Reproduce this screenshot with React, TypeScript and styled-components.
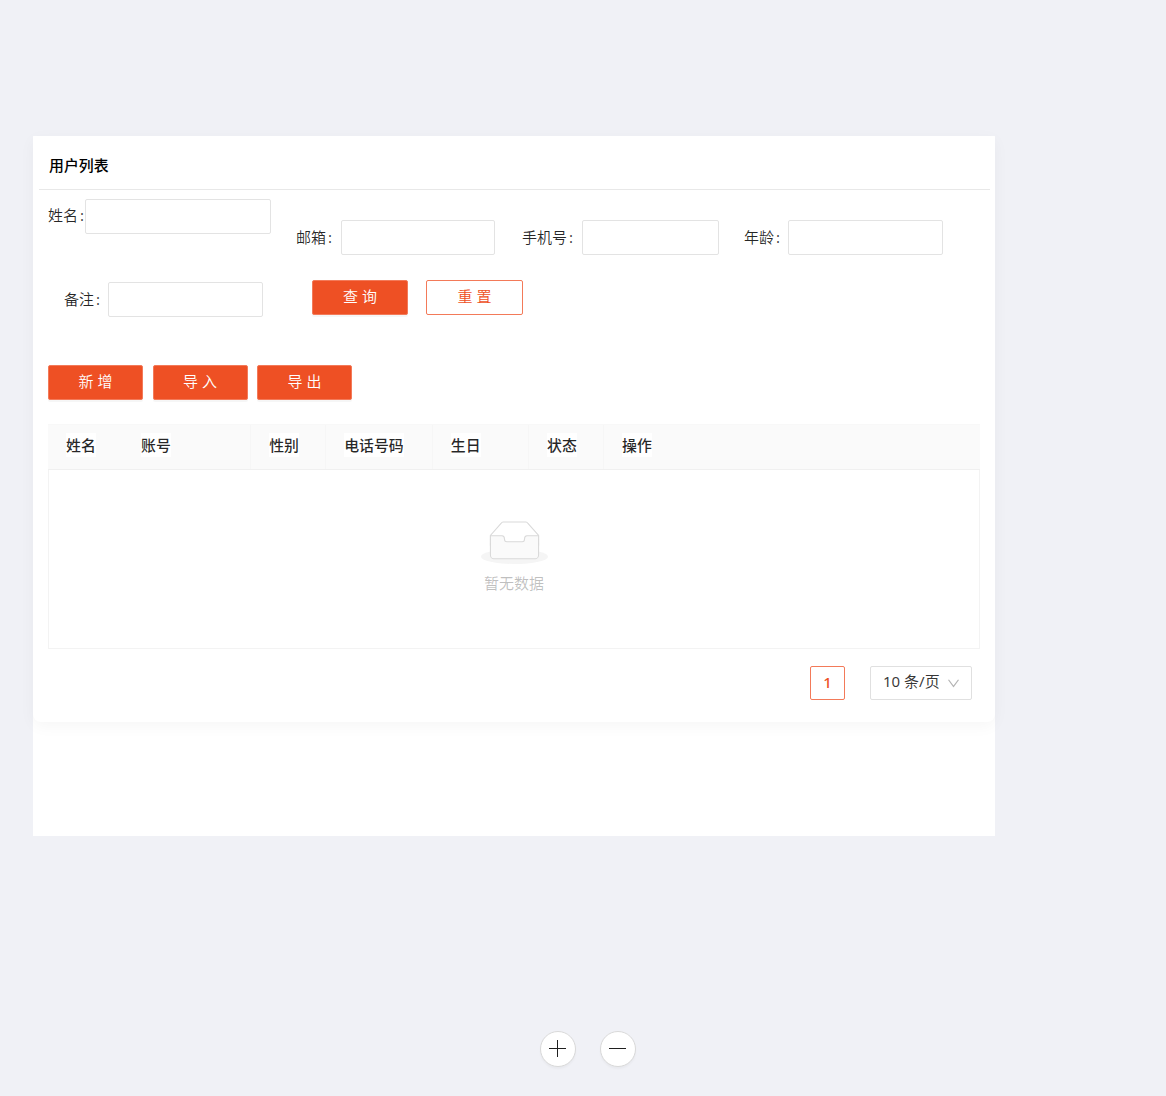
import React from "react";
import styled, { createGlobalStyle, css } from "styled-components";

const accent = "#ee5024";

const GlobalStyle = createGlobalStyle`
  *, *::before, *::after { box-sizing: border-box; }
  body {
    margin: 0;
    background: #f0f1f6;
    font-family: "Noto Sans", "Noto Sans CJK SC", sans-serif;
    font-size: 15px;
    font-weight: 350;
    line-height: 24px;
    color: rgba(0, 0, 0, 0.85);
  }
`;

const Page = styled.div`
  height: 1096px;
  overflow: hidden;
  display: flex;
  flex-direction: column;
  padding: 136px 0 0 33px;
`;

const Board = styled.main`
  width: 962px;
  height: 700px;
  flex: none;
  background: #fff;
`;

const Card = styled.section`
  height: 586px;
  background: #fff;
  border-radius: 2px 2px 8px 8px;
  box-shadow: 0 4px 16px rgba(0, 0, 0, 0.04);
`;

const CardTitle = styled.h1`
  margin: 0 5px 0 6px;
  height: 54px;
  padding: 17px 10px 0;
  border-bottom: 1px solid #e8e8e8;
  font-size: 14.9px;
  line-height: 24px;
  font-weight: 500;
  color: #000;
`;

const FormRow = styled.div<{ $height: number; $left: number; $top: number }>`
  display: flex;
  align-items: flex-start;
  height: ${(p) => p.$height}px;
  padding: ${(p) => p.$top}px 0 0 ${(p) => p.$left}px;
`;

const Field = styled.label<{ $left?: number; $top?: number }>`
  display: flex;
  align-items: center;
  margin: ${(p) => p.$top ?? 0}px 0 0 ${(p) => p.$left ?? 0}px;
`;

const FieldName = styled.span<{ $width: number; $raise?: number }>`
  width: ${(p) => p.$width}px;
  padding-bottom: ${(p) => p.$raise ?? 2}px;
  white-space: nowrap;
`;

const Colon = styled.span`
  margin-left: 2px;
  font-weight: 400;
  color: rgba(0, 0, 0, 0.75);
`;

const Input = styled.input<{ $width: number }>`
  width: ${(p) => p.$width}px;
  height: 35px;
  padding: 4px 11px;
  border: 1px solid #e3e3e3;
  border-radius: 2px;
  background: #fff;
  font: inherit;
  outline: none;
`;

const Button = styled.button<{ $outlined?: boolean; $width?: number; $left?: number }>`
  width: ${(p) => p.$width ?? 95}px;
  height: 35px;
  margin-left: ${(p) => p.$left ?? 0}px;
  padding: 0 0 4px;
  border: 1px solid #f37a59;
  border-radius: 2px;
  font: inherit;
  color: #fff;
  background: ${accent};
  box-shadow: 0 2px 0 rgba(0, 0, 0, 0.035);
  ${(p) =>
    p.$outlined &&
    css`
      color: ${accent};
      background: #fff;
      box-shadow: none;
    `}
`;

const Actions = styled.div`
  display: flex;
  gap: 9.5px;
  padding-left: 15px;
  height: 59px;
`;

const Table = styled.div`
  width: 932px;
  height: 225px;
  margin-left: 15px;
  border: 1px solid #f3f3f3;
  border-top: 0;
  display: flex;
  flex-direction: column;
`;

const TableHead = styled.div`
  display: grid;
  grid-template-columns: 75px 128.2px 75px 106.6px 96.3px 75px 1fr;
  height: 46px;
  margin: 0 -1px;
  background: #fafafa;
  border-bottom: 1px solid #f0f0f0;
  border-top: 1px solid #f8f8f8;
`;

const HeadCell = styled.div<{ $faint?: boolean }>`
  display: flex;
  align-items: center;
  padding: 0 0 4px 18px;
  border-right: 1px solid ${(p) => (p.$faint ? "transparent" : "#f6f6f6")};
  font-size: 14.9px;
  font-weight: 500;
`;

const HeadLabel = styled.span`
  background: #fff;
`;

const Empty = styled.div`
  flex: 1;
  display: flex;
  flex-direction: column;
  align-items: center;
  padding-top: 51px;
  font-weight: 400;
  color: rgba(0, 0, 0, 0.25);
`;

const EmptyArt = styled.svg`
  width: 67px;
  height: 43px;
  margin: 0 0 7px 0;
`;

const Pagination = styled.nav`
  display: flex;
  justify-content: flex-end;
  gap: 25px;
  padding: 17px 23px 0 0;
`;

const PageNumber = styled.span`
  display: flex;
  align-items: center;
  justify-content: center;
  width: 35px;
  height: 34px;
  padding-bottom: 2px;
  border: 1px solid #f37a59;
  border-radius: 2px;
  font-weight: 500;
  color: ${accent};
`;

const PageSize = styled.div`
  display: flex;
  align-items: center;
  justify-content: space-between;
  width: 102px;
  height: 34px;
  padding: 0 11px 4px 12px;
  border: 1px solid #e0e0e0;
  border-radius: 2px;
  font-weight: 400;
  color: rgba(0, 0, 0, 0.8);
  white-space: nowrap;
`;

const Chevron = styled.svg`
  width: 13px;
  height: 13px;
  margin-top: 5px;
  fill: #b4b4b4;
`;

const ZoomBar = styled.div`
  display: flex;
  gap: 24px;
  padding: 195px 0 0 507px;
`;

const ZoomButton = styled.button`
  display: flex;
  align-items: center;
  justify-content: center;
  width: 36px;
  height: 36px;
  padding: 0 1px 1px 0;
  border: 1px solid #d9d9d9;
  border-radius: 50%;
  background: #fff;
  box-shadow: 0 2px 2px rgba(0, 0, 0, 0.03);
`;

const ZoomIcon = styled.svg`
  width: 17px;
  height: 17px;
  fill: none;
  stroke: #1f1f1f;
  stroke-width: 1;
`;

const fields = [
  { name: "邮箱", labelWidth: 45, inputWidth: 154, left: 25 },
  { name: "手机号", labelWidth: 60, inputWidth: 137, left: 27 },
  { name: "年龄", labelWidth: 44, inputWidth: 155, left: 25 },
];

const columns = ["姓名", "账号", "性别", "电话号码", "生日", "状态", "操作"];

export default function App() {
  return (
    <Page>
      <GlobalStyle />
      <Board>
        <Card>
          <CardTitle>用户列表</CardTitle>
          <FormRow $height={90} $left={15} $top={9}>
            <Field>
              <FieldName $width={37} $raise={4}>姓名<Colon>:</Colon></FieldName>
              <Input $width={186} />
            </Field>
            {fields.map((f) => (
              <Field key={f.name} $left={f.left} $top={21}>
                <FieldName $width={f.labelWidth}>{f.name}<Colon>:</Colon></FieldName>
                <Input $width={f.inputWidth} />
              </Field>
            ))}
          </FormRow>
          <FormRow $height={85} $left={30} $top={0}>
            <Field $left={1} $top={2}>
              <FieldName $width={44}>备注<Colon>:</Colon></FieldName>
              <Input $width={155} />
            </Field>
            <Button $left={49} $width={96}>查 询</Button>
            <Button $outlined $left={18} $width={97}>重 置</Button>
          </FormRow>
          <Actions>
            <Button>新 增</Button>
            <Button>导 入</Button>
            <Button>导 出</Button>
          </Actions>
          <Table>
            <TableHead>
              {columns.map((c, i) => (
                <HeadCell key={c} $faint={i === 0 || i === columns.length - 1}>
                  <HeadLabel>{c}</HeadLabel>
                </HeadCell>
              ))}
            </TableHead>
            <Empty>
              <EmptyArt viewBox="0 0 64 41">
                <g transform="translate(0 1)" fill="none" fillRule="evenodd">
                  <ellipse fill="#f5f5f5" cx="32" cy="33" rx="32" ry="7" />
                  <g fillRule="nonzero" stroke="#d9d9d9">
                    <path d="M55 12.76L44.854 1.258C44.367.474 43.656 0 42.907 0H21.093c-.749 0-1.46.474-1.947 1.257L9 12.761V22h46v-9.24z" fill="#fff" />
                    <path d="M41.613 15.931c0-1.605.994-2.93 2.227-2.931H55v18.137C55 33.26 53.68 35 52.05 35h-40.1C10.32 35 9 33.259 9 31.137V13h11.16c1.233 0 2.227 1.323 2.227 2.928v.022c0 1.605 1.005 2.901 2.237 2.901h14.752c1.232 0 2.237-1.308 2.237-2.913v-.007z" fill="#fafafa" />
                  </g>
                </g>
              </EmptyArt>
              暂无数据
            </Empty>
          </Table>
          <Pagination>
            <PageNumber>1</PageNumber>
            <PageSize>
              <span>10 条/页</span>
              <Chevron viewBox="64 64 896 896">
                <path d="M884 256h-75c-5.1 0-9.9 2.5-12.9 6.6L512 654.2 227.9 262.6c-3-4.1-7.8-6.6-12.9-6.6h-75c-6.5 0-10.3 7.4-6.5 12.7l352.6 486.1c12.8 17.6 39 17.6 51.7 0l352.6-486.1c3.9-5.3.1-12.7-6.4-12.7z" />
              </Chevron>
            </PageSize>
          </Pagination>
        </Card>
      </Board>
      <ZoomBar>
        <ZoomButton aria-label="+">
          <ZoomIcon viewBox="0 0 17 17"><path d="M0 8.5h17M8.5 0v17" /></ZoomIcon>
        </ZoomButton>
        <ZoomButton aria-label="-">
          <ZoomIcon viewBox="0 0 17 17"><path d="M0 8.5h17" /></ZoomIcon>
        </ZoomButton>
      </ZoomBar>
    </Page>
  );
}
